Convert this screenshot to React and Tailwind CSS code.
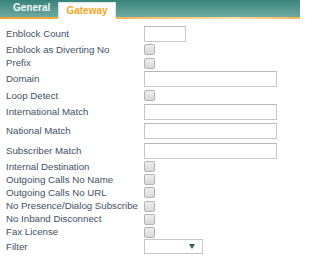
import React from "react";

const rows = [
  { label: "Enblock Count", type: "input", w: "w-[42px]" },
  { label: "Enblock as Diverting No", type: "cb" },
  { label: "Prefix", type: "cb" },
  { label: "Domain", type: "input", w: "w-[133px]" },
  { label: "Loop Detect", type: "cb" },
  { label: "International Match", type: "input", w: "w-[133px]" },
  { label: "National Match", type: "input", w: "w-[133px]" },
  { label: "Subscriber Match", type: "input", w: "w-[133px]" },
  { label: "Internal Destination", type: "cb" },
  { label: "Outgoing Calls No Name", type: "cb" },
  { label: "Outgoing Calls No URL", type: "cb" },
  { label: "No Presence/Dialog Subscribe", type: "cb" },
  { label: "No Inband Disconnect", type: "cb" },
  { label: "Fax License", type: "cb" },
  { label: "Filter", type: "select" },
];

function Checkbox() {
  return (
    <div className="w-[11px] h-[11px] rounded-[2px] border border-[#b3b3b3] bg-gradient-to-b from-[#efefef] to-[#d8d8d8]" />
  );
}

function Control({ row }) {
  if (row.type === "cb") return <Checkbox />;
  if (row.type === "input")
    return <div className={`${row.w} h-[16px] border border-[#c6c6c6] border-t-[#b9b9b9] bg-white`} />;
  return (
    <div className="w-[59px] h-[15px] border border-[#c6c6c6] bg-white flex items-center justify-end pr-[7px]">
      <svg width="6" height="5" viewBox="0 0 6 5">
        <polygon points="0,0 6,0 3,5" fill="#2f5e59" />
      </svg>
    </div>
  );
}

export default function App() {
  return (
    <div className="w-[300px] h-[275px] bg-white overflow-hidden font-['Liberation_Sans',Arial,sans-serif]">
      <div className="h-[19px] flex flex-col bg-[linear-gradient(to_right,#f0a02e,#f6bd62_45%,#fde0a8_78%,#f4b656)]">
        <div className="h-[17px] flex items-end bg-gradient-to-b from-[#37847b] to-[#6ea9a1]">
          <div className="w-[58px] h-[17px] pl-[13px] pb-[2px] flex items-center text-[10px] font-bold text-[#f2f7f6] leading-none">
            General
          </div>
          <div className="w-[58px] h-[17px] -mb-[2px] bg-white border border-b-0 border-[#d9e6e3] flex items-center justify-center text-[10px] font-bold text-[#f5a623] leading-none">
            Gateway
          </div>
        </div>
      </div>
      <div className="pt-[5px] flex flex-col">
        {rows.map((r) => (
          <div
            key={r.label}
            className={`flex items-center ${
              r.type === "input" ? "h-[19.4px]" : r.type === "cb" ? "h-[13.1px]" : "h-[16px]"
            }`}
          >
            <div className="w-[144px] pl-[6px] text-[9.7px] leading-none text-[#3e5166] whitespace-nowrap">
              {r.label}
            </div>
            <Control row={r} />
          </div>
        ))}
      </div>
    </div>
  );
}
